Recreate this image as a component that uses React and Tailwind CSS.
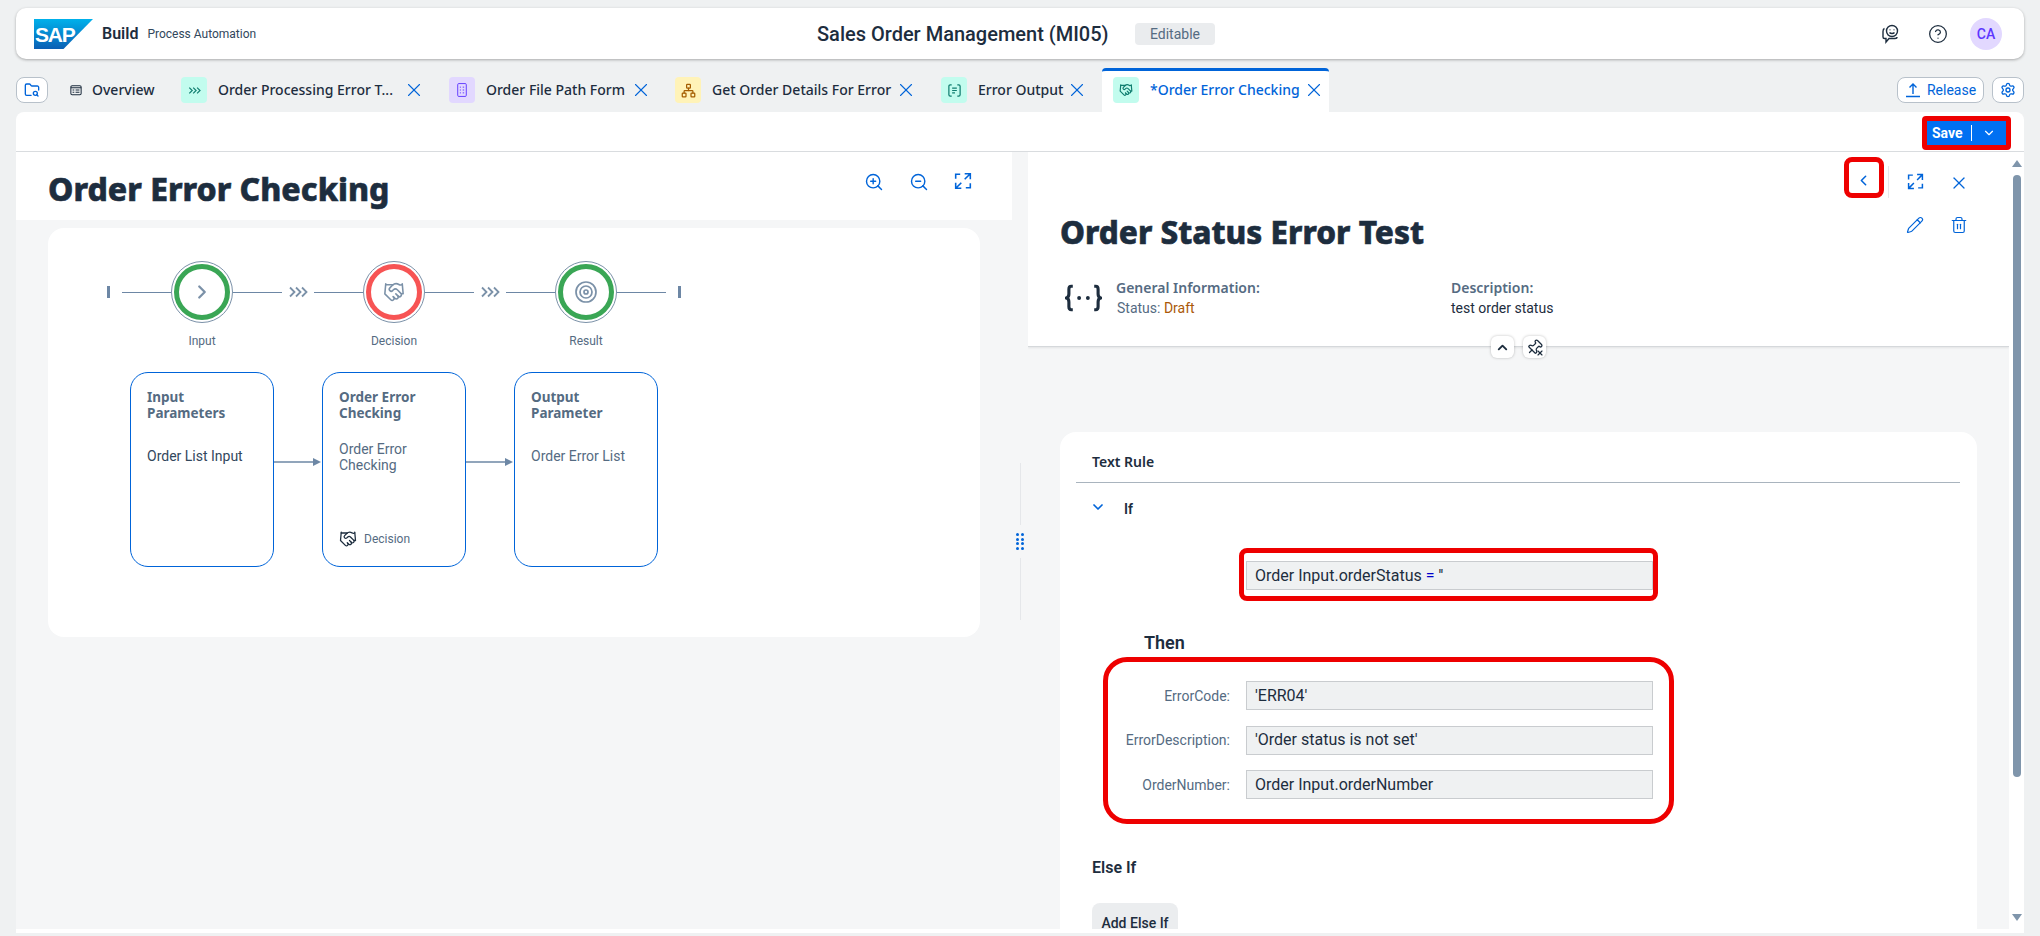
import { Network, FolderSearch, Handshake, Target, ChevronRight, ChevronDown, ChevronUp, ChevronLeft, X, ZoomIn, ZoomOut, Pencil, Trash2, Settings, CircleHelp, Pin } from 'lucide-react'

const heavy = "[font-family:'Noto_Sans',sans-serif]"

function ExpandIcon({ className }) {
  return (
    <svg viewBox="0 0 16 16" fill="none" stroke="currentColor" strokeWidth="1.4" className={className}>
      <path d="M1.5 6V2h4M14.5 10v4h-4" />
      <path d="M9.5 1.5h5v5M14 2 9.5 6.5M1.5 9.5v5h5M2 14l4.5-4.5" />
    </svg>
  )
}

function TripleChevron({ className }) {
  return (
    <svg viewBox="0 0 20 12" fill="none" stroke="currentColor" strokeWidth="1.8" className={className}>
      <path d="M2 1.5 6.5 6 2 10.5M8 1.5 12.5 6 8 10.5M14 1.5 18.5 6 14 10.5" />
    </svg>
  )
}

function OverviewIcon() {
  return (
    <svg viewBox="0 0 14 14" fill="none" stroke="#1d2d3e" strokeWidth="1.2" className="w-3 h-3">
      <rect x="1" y="2" width="12" height="10.5" rx="1.5" />
      <path d="M1 4.5h12M3 7h2M6.5 7H11M3 9.7h2M6.5 9.7H11" />
    </svg>
  )
}

function FormIcon() {
  return (
    <svg viewBox="0 0 14 20" fill="none" stroke="#5d36ff" strokeWidth="1.3" className="w-[10px] h-[16px]">
      <rect x="1" y="1" width="12" height="18" rx="1.5" />
      <path d="M4 6h1.5M8 6h2M4 10h1.5M8 10h2M4 14h1.5M8 14h2" />
    </svg>
  )
}

function BracketDocIcon() {
  return (
    <svg viewBox="0 0 16 16" fill="none" stroke="#0f7d6f" strokeWidth="1.3" className="w-[15px] h-[15px]">
      <path d="M5 2H3.500C2.500 2 2 2.500 2 3.500v9c0 1 .5 1.500 1.500 1.500H5" />
      <path d="M11 2h1.500c1 0 1.500.5 1.500 1.500v9c0 1-.5 1.500-1.500 1.500H11" />
      <path d="M5.500 5.500h5M5.500 8h5M5.500 10.500h3" />
    </svg>
  )
}

function FeedbackIcon() {
  return (
    <svg viewBox="0 0 20 20" fill="none" stroke="#1d2d3e" strokeWidth="1.4" className="w-5 h-5">
      <path d="M3.500 4.500C2 5 2 6 2 7.500V13c0 1 .8 1.500 1.500 1.500H5V18l3-3.500h6c1 0 2-.5 2-1.500" />
      <circle cx="11" cy="7" r="5.500" />
      <path d="M8.500 8.500c1.200 1.400 3.800 1.400 5 0M9 5.500v.8M13 5.500v.8" />
    </svg>
  )
}

function ReleaseIcon() {
  return (
    <svg viewBox="0 0 16 16" fill="none" stroke="currentColor" strokeWidth="1.400" className="w-4 h-4">
      <path d="M8 12V2M4.500 5.500 8 2l3.500 3.500M1 14.500h14" />
    </svg>
  )
}

function BracesDots() {
  return (
    <svg viewBox="0 0 38 28" fill="none" stroke="#1d2d3e" strokeWidth="3.200" className="w-[37px] h-[28px]">
      <path d="M8 2H6.500C4.500 2 4 3 4 5v5c0 2-.8 3.500-2.500 4C3.200 14.500 4 16 4 18v5c0 2 .5 3 2.500 3H8" />
      <path d="M30 2h1.500c2 0 2.500 1 2.500 3v5c0 2 .8 3.500 2.500 4-1.700.5-2.500 2-2.500 4v5c0 2-.5 3-2.500 3H30" />
      <circle cx="14.500" cy="14" r="2" fill="#1d2d3e" stroke="none" />
      <circle cx="23.500" cy="14" r="2" fill="#1d2d3e" stroke="none" />
    </svg>
  )
}

function SapLogo() {
  return (
    <svg viewBox="0 0 59 30" className="w-[59px] h-[30px] shrink-0">
      <defs>
        <linearGradient id="sapBlue" x1="0" y1="0" x2="0" y2="1">
          <stop offset="0" stopColor="#00b1eb" />
          <stop offset="1" stopColor="#0a5fb4" />
        </linearGradient>
      </defs>
      <polygon points="0,0 59,0 29.500,30 0,30" fill="url(#sapBlue)" />
      <text x="1" y="23" fill="#fff" fontFamily="Liberation Sans, sans-serif" fontWeight="700" fontSize="21" letterSpacing="-1.200">SAP</text>
    </svg>
  )
}

const tabs = [
  { label: 'Order Processing Error T...', chip: 'bg-[#c2fcee]', width: 'w-[179px]', gap: 'mr-[24.5px]', icon: <TripleChevron className="w-[13px] h-[9px] text-[#0f7d6f]" /> },
  { label: 'Order File Path Form', chip: 'bg-[#e2d8ff]', width: 'w-[138px]', gap: 'mr-[23.5px]', icon: <FormIcon /> },
  { label: 'Get Order Details For Error', chip: 'bg-[#fff3b8]', width: 'w-[177px]', gap: 'mr-[24.5px]', icon: <Network size={15} className="text-[#a45d00]" /> },
  { label: 'Error Output', chip: 'bg-[#c2fcee]', width: 'w-[82px]', gap: 'mr-[14.5px]', icon: <BracketDocIcon /> },
]

function Tab({ tab }) {
  return (
    <div className={`flex items-center h-[26px] ${tab.gap}`}>
      <div className={`w-[26px] h-[26px] rounded-[4px] flex items-center justify-center ${tab.chip}`}>{tab.icon}</div>
      <span className={`ml-[11px] text-sm font-medium text-[#1d2d3e] whitespace-nowrap ${heavy} ${tab.width}`}>{tab.label}</span>
      <X size={22} strokeWidth={1.200} className="ml-[5.5px] text-[#0064d9]" />
    </div>
  )
}

function Connector({ width }) {
  return <div className={`h-px bg-[#6d87a5] ${width}`} />
}

function Step({ label, ring, icon }) {
  return (
    <div className="w-[62px] flex flex-col items-center shrink-0">
      <div className="w-[62px] h-[62px] rounded-full border border-[#7b91a8] flex items-center justify-center">
        <div className={`w-[56px] h-[56px] rounded-full border-[5px] flex items-center justify-center text-[#7b91a8] ${ring}`}>{icon}</div>
      </div>
      <span className="mt-[10px] text-xs leading-4 text-[#556b82] whitespace-nowrap">{label}</span>
    </div>
  )
}

function FlowCard({ title, children }) {
  return (
    <div className="w-[144px] h-[195px] shrink-0 border border-[#0064d9] rounded-[18px] pl-4 pt-[16px] pr-[24px] flex flex-col">
      <div className={`text-[13.500px] leading-4 font-bold text-[#556b82] ${heavy}`}>{title}</div>
      {children}
    </div>
  )
}

function FlowArrow() {
  return (
    <svg viewBox="0 0 48 10" className="w-[48px] h-[10px] mt-[85px] shrink-0">
      <path d="M0 5h40" stroke="#6d87a5" strokeWidth="1.500" />
      <path d="M39 1l8 4-8 4z" fill="#6d87a5" />
    </svg>
  )
}

function ReadOnlyField({ children }) {
  return (
    <div className="w-[407px] h-[29px] shrink-0 bg-[#eff1f2] border border-[#c9cccf] flex items-center pl-[8px] text-base text-[#1d2d3e] whitespace-nowrap">
      {children}
    </div>
  )
}

function ThenRow({ label, value }) {
  return (
    <div className="flex items-center">
      <span className="w-[122px] text-right text-sm text-[#556b82]">{label}</span>
      <div className="ml-4"><ReadOnlyField>{value}</ReadOnlyField></div>
    </div>
  )
}

export default function App() {
  return (
    <div className="h-[936px] overflow-hidden bg-[#eff1f2] px-4 pt-2 flex flex-col [font-family:Roboto,sans-serif] text-[#1d2d3e]">
      {/* shell bar */}
      <header className="h-[51px] shrink-0 bg-white rounded-[10px] shadow-[0_1px_3px_rgba(0,0,0,0.3)] flex items-center pl-[18px] pr-[22px]">
        <div className="w-[783px] flex items-center">
          <SapLogo />
          <span className="ml-[9px] text-base font-semibold">Build</span>
          <span className="ml-[9px] text-xs text-[#32475c]">Process Automation</span>
        </div>
        <span className="w-[302px] text-xl font-medium whitespace-nowrap">Sales Order Management (MI05)</span>
        <span className="ml-4 w-[80px] h-[22px] rounded bg-[#eaecee] text-[#556b82] text-sm flex items-center justify-center">Editable</span>
        <div className="ml-auto flex items-center">
          <FeedbackIcon />
          <CircleHelp size={20} strokeWidth={1.500} className="ml-[27px] text-[#1d2d3e]" />
          <div className="ml-[22px] w-8 h-8 rounded-full bg-[#e2d8ff] text-[#5d36ff] text-sm font-medium flex items-center justify-center">CA</div>
        </div>
      </header>

      {/* tab strip */}
      <div className="h-[53px] shrink-0 pt-[9px] flex items-start">
        <div className="mt-[9px] flex items-center">
          <div className="w-8 h-[26px] rounded-lg bg-white border border-[#b8c1ca] flex items-center justify-center mr-[22px]">
            <FolderSearch size={16} className="text-[#0064d9]" />
          </div>
          <OverviewIcon />
          <span className={`ml-[10px] mr-[27px] w-[62px] text-sm font-medium whitespace-nowrap ${heavy}`}>Overview</span>
          {tabs.map((t) => <Tab key={t.label} tab={t} />)}
        </div>
        <div className="w-[227px] h-[44px] bg-white border-t-[3px] border-[#0064d9] rounded-t-sm flex items-start pt-[6px] pl-[11px]">
          <div className="w-[26px] h-[26px] rounded-[4px] bg-[#c2fcee] flex items-center justify-center">
            <Handshake size={14} className="text-[#0f7d6f]" />
          </div>
          <span className={`ml-[11px] w-[147px] text-sm leading-[26px] font-medium text-[#0064d9] whitespace-nowrap ${heavy}`}>*Order Error Checking</span>
          <X size={22} strokeWidth={1.200} className="ml-[5.5px] mt-[2px] text-[#0064d9]" />
        </div>
        <div className="ml-auto mt-[9px] flex items-center gap-2">
          <div className="w-[87px] h-[26px] rounded-lg bg-white border border-[#b8c1ca] text-[#0064d9] text-sm flex items-center justify-center gap-[6px]">
            <ReleaseIcon />Release
          </div>
          <div className="w-8 h-[26px] rounded-lg bg-white border border-[#b8c1ca] text-[#0064d9] flex items-center justify-center">
            <Settings size={16} />
          </div>
        </div>
      </div>

      {/* page */}
      <main className="h-[821px] shrink-0 bg-white rounded-t-lg pb-1 flex flex-col">
        <div className="h-[40px] shrink-0 border-b border-[#d9dcdf] flex justify-end pr-[13px] pt-1">
          <div className="h-[34px] w-[89px] border-[5px] border-[#ee0000] rounded-[4px] overflow-hidden">
            <div className="h-full bg-[#0070f2] text-white text-sm font-bold flex items-center pl-[5px]">
              Save
              <span className="ml-2 h-4 w-px bg-white" />
              <ChevronDown size={14} strokeWidth={2} className="ml-[10px]" />
            </div>
          </div>
        </div>

        <div className="flex-1 min-h-0 flex overflow-hidden">
          {/* left column */}
          <section className="w-[996px] shrink-0 flex flex-col bg-[#f5f6f7]">
            <div className="h-[68px] shrink-0 bg-white flex justify-between pl-8 pr-[40px] pt-[17px]">
              <h1 className={`text-[32px] leading-10 font-extrabold whitespace-nowrap [-webkit-text-stroke:0.6px_#1d2d3e] ${heavy}`}>Order Error Checking</h1>
              <div className="flex gap-[25px] pt-[3px] text-[#0064d9] h-fit">
                <ZoomIn size={20} strokeWidth={1.700} />
                <ZoomOut size={20} strokeWidth={1.700} />
                <ExpandIcon className="w-[18px] h-[18px]" />
              </div>
            </div>
            <div className="px-8 pt-2">
              <div className="h-[409px] bg-white rounded-2xl">
                <div className="pl-[59px] pt-[33px] flex items-start">
                  <div className="h-[62px] flex items-center shrink-0">
                    <div className="w-[3px] h-3 bg-[#6d87a5]" />
                    <div className="ml-3"><Connector width="w-[49px]" /></div>
                  </div>
                  <Step label="Input" ring="border-[#3aa655]" icon={<ChevronRight size={22} strokeWidth={2.500} />} />
                  <div className="h-[62px] flex items-center shrink-0">
                    <Connector width="w-[49px]" />
                    <TripleChevron className="mx-[4px] w-[24px] h-[12px] text-[#7b91a8]" />
                    <Connector width="w-[49px]" />
                  </div>
                  <Step label="Decision" ring="border-[#f75454]" icon={<Handshake size={22} strokeWidth={1.700} />} />
                  <div className="h-[62px] flex items-center shrink-0">
                    <Connector width="w-[49px]" />
                    <TripleChevron className="mx-[4px] w-[24px] h-[12px] text-[#7b91a8]" />
                    <Connector width="w-[49px]" />
                  </div>
                  <Step label="Result" ring="border-[#3aa655]" icon={<Target size={24} strokeWidth={1.700} />} />
                  <div className="h-[62px] flex items-center shrink-0">
                    <Connector width="w-[49px]" />
                    <div className="ml-3 w-[3px] h-3 bg-[#6d87a5]" />
                  </div>
                </div>

                <div className="pl-[82px] mt-[23px] flex items-start">
                  <FlowCard title="Input Parameters">
                    <div className="mt-[27px] text-sm leading-4 text-[#32475c] whitespace-nowrap">Order List Input</div>
                  </FlowCard>
                  <FlowArrow />
                  <FlowCard title="Order Error Checking">
                    <div className="mt-[20px] text-sm leading-4 text-[#556b82]">Order Error Checking</div>
                    <div className="mt-auto mb-[18px] flex items-center gap-[7px] text-xs text-[#556b82]">
                      <Handshake size={18} strokeWidth={1.700} className="text-[#1d2d3e]" />Decision
                    </div>
                  </FlowCard>
                  <FlowArrow />
                  <FlowCard title="Output Parameter">
                    <div className="mt-[27px] text-sm leading-4 text-[#556b82] whitespace-nowrap">Order Error List</div>
                  </FlowCard>
                </div>
              </div>
            </div>
          </section>

          {/* splitter */}
          <div className="w-4 shrink-0 bg-[#f5f6f7] flex flex-col items-center pt-[311px]">
            <div className="w-px h-[62px] bg-[#e5e7ea]" />
            <div className="my-[8px] grid grid-cols-2 gap-[1.500px]">
              {Array.from({ length: 8 }).map((_, i) => (
                <span key={i} className="w-[3px] h-[3px] rounded-full bg-[#0064d9]" />
              ))}
            </div>
            <div className="w-px h-[62px] bg-[#e5e7ea]" />
          </div>

          {/* right column */}
          <section className="w-[981px] shrink-0 bg-[#f5f6f7] overflow-hidden">
            <div className="relative h-[195px] bg-white border-b border-[#d5d8db] shadow-[0_1px_2px_rgba(0,0,0,0.08)]">
              <div className="pt-[5px] pr-[34px] flex justify-end items-start">
                <div className="w-[40px] h-[41px] border-[5px] border-[#ee0000] rounded-lg flex items-center justify-center pt-[6px] pr-[2px] text-[#0064d9]">
                  <ChevronLeft size={17} strokeWidth={2.200} />
                </div>
                <div className="ml-1 mt-[9px] w-px h-[32px] bg-[#e5e7ea]" />
                <div className="ml-[10px] pt-[16px] flex gap-[12px] text-[#0064d9]">
                  <div className="w-8 flex justify-center"><ExpandIcon className="w-[17px] h-[17px]" /></div>
                  <div className="w-8 flex justify-center"><X size={20} strokeWidth={1.500} /></div>
                </div>
              </div>
              <div className="mt-[14px] pl-8 pr-[34px] flex justify-between items-start">
                <h2 className={`text-[31.500px] leading-10 font-extrabold whitespace-nowrap [-webkit-text-stroke:0.6px_#1d2d3e] ${heavy}`}>Order Status Error Test</h2>
                <div className="mt-[4px] flex gap-[12px] text-[#0064d9]">
                  <div className="w-8 flex justify-center"><Pencil size={18} strokeWidth={1.600} /></div>
                  <div className="w-8 flex justify-center"><Trash2 size={18} strokeWidth={1.600} /></div>
                </div>
              </div>
              <div className="mt-[26px] pl-[37px] flex items-center">
                <BracesDots />
                <div className="ml-[14px] w-[335px] text-sm leading-5">
                  <div className={`font-semibold text-[#556b82] ${heavy}`}>General Information:</div>
                  <div className="text-[#556b82] pl-px">Status: <span className="text-[#aa5808]">Draft</span></div>
                </div>
                <div className="text-sm leading-5">
                  <div className={`font-semibold text-[#556b82] ${heavy}`}>Description:</div>
                  <div className="text-[#1d2d3e]">test order status</div>
                </div>
              </div>
              <div className="absolute left-[463px] top-[184px] flex gap-[9px]">
                <div className="w-[23px] h-[22px] rounded-md bg-white shadow-[0_0_3px_rgba(0,0,0,0.25)] flex items-center justify-center">
                  <ChevronUp size={15} strokeWidth={3} />
                </div>
                <div className="relative w-[23px] h-[22px] rounded-md bg-white shadow-[0_0_3px_rgba(0,0,0,0.25)] flex items-center justify-center">
                  <Pin size={17} strokeWidth={1.800} className="rotate-45" />
                  <X size={8} strokeWidth={3.500} className="absolute right-[2px] bottom-[1px]" />
                </div>
              </div>
            </div>

            <div className="pt-[85px] px-8">
              <div className="bg-white rounded-t-2xl h-[520px] pt-5">
                <div className={`ml-4 mr-[17px] pl-4 h-[31px] border-b border-[#a9b4be] text-sm font-semibold leading-5 ${heavy}`}>Text Rule</div>
                <div className="mt-[16px] pl-[30px] flex items-center h-5">
                  <ChevronDown size={16} strokeWidth={2.600} className="text-[#0064d9] -mt-1" />
                  <span className="ml-[18px] text-sm font-semibold">If</span>
                </div>
                <div className="mt-[29px] ml-[179px] w-[419px] h-[53px] border-[5px] border-[#ee0000] rounded-lg pl-[2px] pt-[8px]">
                  <ReadOnlyField>Order Input.orderStatus <span className="text-[#0000cc] mx-1">=</span> ''</ReadOnlyField>
                </div>
                <div className="mt-[30px] ml-[84px] text-lg leading-6 font-semibold">Then</div>
                <div className="mt-[2px] ml-[43px] w-[571px] h-[167px] border-[5px] border-[#ee0000] rounded-3xl pt-[19px] flex flex-col gap-[15.500px]">
                  <ThenRow label="ErrorCode:" value="'ERR04'" />
                  <ThenRow label="ErrorDescription:" value="'Order status is not set'" />
                  <ThenRow label="OrderNumber:" value="Order Input.orderNumber" />
                </div>
                <div className="mt-[34px] ml-8 text-base leading-5 font-semibold">Else If</div>
                <div className="mt-[25px] ml-8 w-[86px] h-[40px] rounded-lg bg-[#ebedef] text-sm font-medium flex items-center justify-center">Add Else If</div>
              </div>
            </div>
          </section>

          {/* scrollbar */}
          <div className="flex-1 flex flex-col items-center pt-[8px] pb-[8px]">
            <div className="w-0 h-0 border-x-[5px] border-x-transparent border-b-[7px] border-b-[#7f95ab]" />
            <div className="mt-[8px] w-2 h-[602px] rounded bg-[#7f95ab]" />
            <div className="mt-auto w-0 h-0 border-x-[5px] border-x-transparent border-t-[7px] border-t-[#7f95ab]" />
          </div>
        </div>
      </main>
    </div>
  )
}
